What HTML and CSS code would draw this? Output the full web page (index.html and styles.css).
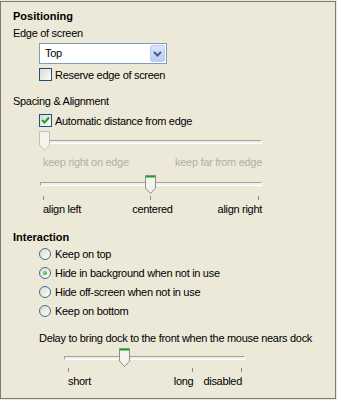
FILE: index.html
```html
<!DOCTYPE html>
<html>
<head>
<meta charset="utf-8">
<link rel="stylesheet" href="styles.css">
</head>
<body>
<div class="panel">
  <div class="heading">Positioning</div>
  <div class="label edge-label">Edge of screen</div>
  <div class="combo">
    <span class="combo-text">Top</span>
    <span class="combo-btn">
      <svg width="9" height="6" viewBox="0 0 9 6"><path d="M1 1 L4.5 4.5 L8 1" fill="none" stroke="#4d6185" stroke-width="2"/></svg>
    </span>
  </div>
  <div class="check-row reserve">
    <span class="checkbox"></span>
    <span>Reserve edge of screen</span>
  </div>

  <div class="label spacing-label">Spacing &amp; Alignment</div>
  <div class="check-row auto">
    <span class="checkbox">
      <svg width="11" height="11" viewBox="0 0 11 11"><path d="M2 5 L4.5 7.5 L9 2.5" fill="none" stroke="#21a121" stroke-width="2"/></svg>
    </span>
    <span>Automatic distance from edge</span>
  </div>

  <div class="slider s1">
    <div class="track"></div>
    <svg class="thumb" style="left:-1px" width="11" height="20" viewBox="0 0 11 20"><path d="M0.5 0.5 H10.5 V14 L5.5 19.5 L0.5 14 Z" fill="#f4f3ee" stroke="#c2c0b5"/></svg>
  </div>
  <div class="scale-labels disabled s1-labels">
    <span>keep right on edge</span>
    <span>keep far from edge</span>
  </div>

  <div class="slider s2">
    <div class="track"></div>
    <svg class="thumb" style="left:105px" width="11" height="19" viewBox="0 0 11 19"><path d="M0.5 0.5 H10.5 V13 L5.5 18.5 L0.5 13 Z" fill="#f4f3ee" stroke="#8f8e86"/><path d="M1 1.5 H10" stroke="#21a121"/><path d="M1 2.5 H10" stroke="#6fd36f"/></svg>
    <span class="tick" style="left:3px"></span>
    <span class="tick" style="left:110px"></span>
    <span class="tick" style="left:218px"></span>
  </div>
  <div class="scale-labels s2-labels">
    <span class="l">align left</span>
    <span class="c">centered</span>
    <span class="r">align right</span>
  </div>

  <div class="heading interaction">Interaction</div>
  <div class="radios">
    <div class="radio-row"><span class="radio"></span><span>Keep on top</span></div>
    <div class="radio-row"><span class="radio on"></span><span>Hide in background when not in use</span></div>
    <div class="radio-row"><span class="radio"></span><span>Hide off-screen when not in use</span></div>
    <div class="radio-row"><span class="radio"></span><span>Keep on bottom</span></div>
  </div>

  <div class="label delay-label">Delay to bring dock to the front when the mouse nears dock</div>
  <div class="slider s3">
    <div class="track"></div>
    <svg class="thumb" style="left:55px" width="11" height="19" viewBox="0 0 11 19"><path d="M0.5 0.5 H10.5 V13 L5.5 18.5 L0.5 13 Z" fill="#f4f3ee" stroke="#8f8e86"/><path d="M1 1.5 H10" stroke="#21a121"/><path d="M1 2.5 H10" stroke="#6fd36f"/></svg>
    <span class="tick" style="left:4px"></span>
    <span class="tick" style="left:128px"></span>
    <span class="tick" style="left:177px"></span>
  </div>
  <div class="scale-labels s3-labels">
    <span class="short">short</span>
    <span>long</span>
    <span>disabled</span>
  </div>
</div>
</body>
</html>
```

FILE: styles.css
```css
html, body {
  margin: 0;
  padding: 0;
  background: #ece9d8;
}
body {
  font-family: "Liberation Sans", Arial, sans-serif;
  font-size: 11px;
  letter-spacing: -0.3px;
  color: #000;
}
.panel {
  margin-top: 1px;
  width: 336px;
  height: 398px;
  box-sizing: border-box;
  border: 1px solid #7d7d6e;
  padding: 7px 0 0 12px;
}
.heading {
  font-weight: bold;
  letter-spacing: 0;
  height: 14px;
  line-height: 14px;
}
.label {
  height: 14px;
  line-height: 14px;
}
.edge-label { margin-top: 3px; }
.combo {
  margin: 3px 0 0 26px;
  width: 128px;
  height: 21px;
  box-sizing: border-box;
  border: 1px solid #7f9db9;
  background: #fff;
  display: flex;
  align-items: center;
  justify-content: space-between;
  padding: 1px;
}
.combo-text {
  padding-left: 4px;
  line-height: 17px;
}
.combo-btn {
  width: 15px;
  height: 17px;
  box-sizing: border-box;
  border: 1px solid #bccdf4;
  border-radius: 2px;
  background: linear-gradient(#dbe6fd, #b6cbf7);
  display: flex;
  align-items: center;
  justify-content: center;
}
.check-row {
  margin-left: 26px;
  height: 15px;
  display: flex;
  align-items: center;
  gap: 3px;
}
.reserve { margin-top: 3px; }
.auto { margin-top: 5px; }
.checkbox {
  width: 13px;
  height: 13px;
  box-sizing: border-box;
  border: 1px solid #1c5180;
  background: linear-gradient(135deg, #dcdcd5, #fbfbf9);
  display: flex;
  align-items: center;
  justify-content: center;
}
.spacing-label { margin-top: 12px; }

.slider {
  position: relative;
  margin-left: 27px;
  width: 222px;
}
.track {
  height: 4px;
  box-sizing: border-box;
  border-top: 1px solid #a3a29c;
  border-left: 1px solid #a3a29c;
  border-bottom: 1px solid #fff;
  border-right: 1px solid #fff;
  background: #f0efe8;
}
.thumb {
  position: absolute;
  display: block;
}
.tick {
  position: absolute;
  width: 1px;
  height: 4px;
  background: #8d8c84;
}
.s1 {
  margin-top: 2px;
  height: 22px;
  padding-top: 10px;
  box-sizing: border-box;
}
.s1 .thumb { top: 1px; }
.scale-labels {
  display: flex;
  justify-content: space-between;
  height: 14px;
  line-height: 14px;
}
.disabled { color: #b3b0a3; }
.s1-labels {
  margin: 3px 0 0 30px;
  width: 219px;
}
.s2 {
  margin-top: 5px;
  height: 28px;
  padding-top: 8px;
  box-sizing: border-box;
}
.s2 .thumb { top: 1px; }
.s2 .tick { top: 22px; }
.s2-labels {
  display: grid;
  grid-template-columns: 1fr auto 1fr;
  margin-left: 30px;
  width: 219px;
  height: 15px;
  line-height: 15px;
}
.s2-labels .r { text-align: right; }
.interaction { margin-top: 13px; }
.radios {
  margin-left: 26px;
}
.radio-row {
  height: 19px;
  display: flex;
  align-items: center;
  gap: 4px;
}
.radio {
  width: 12px;
  height: 12px;
  box-sizing: border-box;
  border: 1px solid #4a6a8c;
  border-radius: 50%;
  background: linear-gradient(135deg, #dcdcd5, #fbfbf9);
  display: flex;
  align-items: center;
  justify-content: center;
}
.radio.on::after {
  content: "";
  width: 4px;
  height: 4px;
  border-radius: 50%;
  background: radial-gradient(circle at 40% 40%, #7be37b, #21a121);
}
.delay-label {
  margin: 11px 0 0 26px;
}
.s3 {
  margin: 2px 0 0 51px;
  width: 181px;
  height: 27px;
  padding-top: 9px;
  box-sizing: border-box;
}
.s3 .thumb { top: 1px; }
.s3 .tick { top: 21px; }
.s3-labels {
  margin-left: 55px;
  width: 174px;
  justify-content: flex-start;
  gap: 10px;
}
.s3-labels .short { flex: 1; }
```
